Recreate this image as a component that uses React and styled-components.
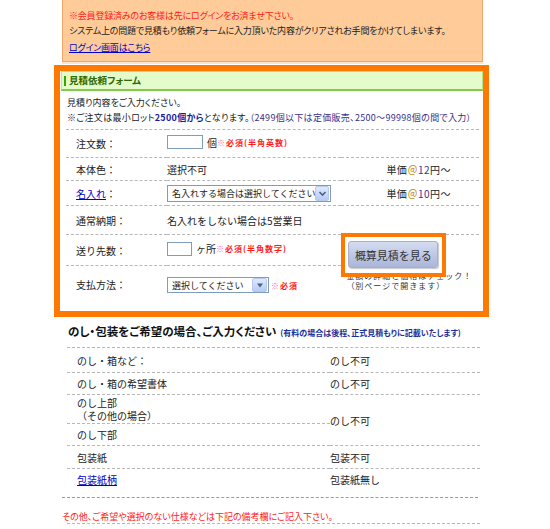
import React from "react";
import styled, { createGlobalStyle } from "styled-components";

const GlobalStyle = createGlobalStyle`
  body {
    margin: 0;
    background: #fff;
    font-family: "Noto Sans CJK JP", "Noto Sans", sans-serif;
    color: #222;
  }
`;

const Page = styled.div`
  width: 421px;
  margin-left: 62px;
  font-size: 10px;
  line-height: 15px;
`;

const Notice = styled.div`
  height: 62px;
  box-sizing: border-box;
  background: #ffcc99;
  border: 1px solid #f5a46a;
  border-top: none;
  padding: 8px 0 0 6px;
  font-size: 9px;
  letter-spacing: -0.2px;
  font-feature-settings: "palt";
  box-shadow: 0 2px 0 #fde6cf;
`;

const RedLine = styled.div`
  color: #ff1a1a;
`;

const TextLink = styled.a`
  color: #0000cc;
  text-decoration: underline;
`;

const NoticeLink = styled(TextLink)`
  display: inline-block;
  margin-top: 2px;
`;

const FormFrame = styled.div`
  width: 435px;
  margin: 3px 0 0 -8px;
  box-sizing: border-box;
  border: 6px solid #ff7800;
  padding: 0 0 0 1px;
  height: 252px;
`;

const FormTitle = styled.div`
  height: 20px;
  box-sizing: border-box;
  background: #e4fcc9;
  border: 1px solid #b4e68e;
  border-bottom: 2px solid #84c94a;
  color: #2f6a00;
  font-size: 9.5px;
  font-weight: bold;
  padding-left: 2px;
  display: flex;
  align-items: center;
  font-feature-settings: "palt";

  &::before {
    content: "";
    width: 2px;
    height: 10px;
    background: #3aa300;
    margin-right: 3px;
  }
`;

const Intro = styled.div`
  margin-top: 4px;
  padding-left: 6px;
  font-size: 9px;
  font-feature-settings: "palt";
`;

const IntroLine = styled.div`
  letter-spacing: ${(p) => p.$spacing || 0}px;
  white-space: nowrap;
`;

const Strong = styled.b`
  color: ${(p) => p.$color || "inherit"};
  font-weight: bold;
`;

const Tone = styled.span`
  color: ${(p) => p.$color};
`;

const Table = styled.table`
  border-collapse: collapse;
  margin: ${(p) => p.$top}px 0 0 5px;
  width: 413px;

  td {
    border-top: 1px dashed #b8b8b8;
    padding: 0;
    vertical-align: middle;
  }
`;

const Row = styled.tr`
  height: ${(p) => p.$h}px;
`;

const Label = styled.td`
  width: ${(p) => p.$w}px;
  padding-left: 10px !important;
  box-sizing: border-box;
`;

const Price = styled.td`
  padding-left: 45px !important;
  letter-spacing: 0.5px;
`;

const Field = styled.span`
  display: inline-flex;
  align-items: center;
`;

const Box = styled.span`
  display: inline-block;
  width: ${(p) => p.$w}px;
  height: 14px;
  box-sizing: border-box;
  border: 1px solid #7f9db9;
  background: #fff;
  margin-right: 4px;
`;

const Required = styled.span`
  color: #ff1a1a;
  font-size: 8px;
  font-weight: bold;
  letter-spacing: 1px;

  &::before {
    content: "※";
    color: #ff66aa;
    font-weight: normal;
  }
`;

const Select = styled.span`
  display: inline-flex;
  align-items: center;
  justify-content: space-between;
  width: ${(p) => p.$w}px;
  height: ${(p) => p.$h}px;
  box-sizing: border-box;
  border: 1px solid #7f9db9;
  padding: 0 1px 0 4px;
  background: #fff;
  margin-right: 2px;
  font-size: 9px;
  white-space: nowrap;
`;

const SelectButton = styled.span`
  display: inline-flex;
  align-items: center;
  justify-content: center;
  width: 15px;
  height: ${(p) => p.$h}px;
  border-radius: 2px;
  background: linear-gradient(#dfe9fd, #b6cbf5);
  border: 1px solid #b7c9ef;
  box-sizing: border-box;
`;

const ButtonCell = styled.td`
  vertical-align: top !important;
  padding-left: 0 !important;
`;

const ButtonFrame = styled.div`
  position: relative;
  z-index: 1;
  width: 105px;
  height: 44px;
  box-sizing: border-box;
  margin-top: -2px;
  border: 4px solid #ff7800;
  background: #fff;
  padding: 4px 0 0 3px;
`;

const EstimateButton = styled.button`
  width: 90px;
  height: 27px;
  border: 1px solid #a9b1c6;
  border-radius: 3px;
  background: linear-gradient(#d4dcf0, #aab6d9);
  box-shadow: 1px 1px 1px #c8c8c8;
  font-family: inherit;
  font-size: 11px;
  color: #333;
  padding: 0;
`;

const ButtonNote = styled.div`
  margin: -6px 0 0 5px;
  font-size: 8px;
  line-height: 10px;
  letter-spacing: 1px;
  color: #333;
  white-space: nowrap;
`;

const SectionHead = styled.div`
  margin-top: 5px;
  padding-left: 6px;
  font-size: 11.5px;
  line-height: 18px;
  font-weight: bold;
  color: #111;
  font-feature-settings: "palt";
  white-space: nowrap;
`;

const SectionSub = styled.span`
  font-size: 8px;
  color: #1a2f99;
  margin-left: 4px;
`;

const NoteLines = styled.div`
  line-height: 13px;
`;

const Rule = styled.div`
  margin-top: 6px;
  width: 416px;
  border-top: 1px dashed #9a9a9a;
`;

const RedNote = styled.div`
  margin-top: 13px;
  color: #ff1a1a;
  font-size: 9px;
  line-height: 12px;
  font-feature-settings: "palt";
`;

const DashLine = styled.div`
  margin-left: 5px;
  width: 413px;
  border-top: 1px dashed #b8b8b8;
`;

const Chevron = () => (
  <svg width="9" height="7" viewBox="0 0 9 7">
    <path d="M1.5 2 L4.5 5 L7.5 2" fill="none" stroke="#4d6185" strokeWidth="1.6" />
  </svg>
);

const Triangle = () => (
  <svg width="8" height="5" viewBox="0 0 8 5">
    <path d="M1 0.5 H7 L4 4.5 Z" fill="#4d6185" />
  </svg>
);

const UnitPrice = ({ value }) => (
  <>
    単価<Tone $color="#b8860b">＠</Tone>
    <Tone $color="#333399">{value}</Tone>円～
  </>
);

export default function App() {
  return (
    <Page>
      <GlobalStyle />
      <Notice>
        <RedLine>※会員登録済みのお客様は先にログインをお済ませ下さい。</RedLine>
        <div>システム上の問題で見積もり依頼フォームに入力頂いた内容がクリアされお手間をかけてしまいます。</div>
        <NoticeLink href="#">ログイン画面はこちら</NoticeLink>
      </Notice>

      <FormFrame>
        <FormTitle>見積依頼フォーム</FormTitle>
        <Intro>
          <IntroLine>見積り内容をご入力ください。</IntroLine>
          <IntroLine $spacing={0.3}>
            ※ご注文は最小ロット<Strong $color="#1a1aa0">2500個から</Strong>となります。
            <Tone $color="#3a2f8a">（2499個以下は定価販売、2500～99998個の間で入力）</Tone>
          </IntroLine>
        </Intro>
        <Table $top={4}>
          <tbody>
            <Row $h={28}>
              <Label $w={101}>注文数：</Label>
              <td colSpan={2}>
                <Field>
                  <Box $w={36} />個<Required>必須(半角英数)</Required>
                </Field>
              </td>
            </Row>
            <Row $h={23}>
              <Label $w={101}>本体色：</Label>
              <td>選択不可</td>
              <Price><UnitPrice value="12" /></Price>
            </Row>
            <Row $h={25}>
              <Label $w={101}>
                <TextLink href="#">名入れ</TextLink>：
              </Label>
              <td>
                <Select $w={164} $h={17}>
                  名入れする場合は選択してください
                  <SelectButton $h={15}><Chevron /></SelectButton>
                </Select>
              </td>
              <Price><UnitPrice value="10" /></Price>
            </Row>
            <Row $h={29}>
              <Label $w={101}>通常納期：</Label>
              <td colSpan={2}>名入れをしない場合は5営業日</td>
            </Row>
            <Row $h={31}>
              <Label $w={101}>送り先数：</Label>
              <td>
                <Field>
                  <Box $w={25} />ヶ所<Required>必須(半角数字)</Required>
                </Field>
              </td>
              <ButtonCell rowSpan={2}>
                <ButtonFrame>
                  <EstimateButton type="button">概算見積を見る</EstimateButton>
                </ButtonFrame>
                <ButtonNote>
                  <div>金額の詳細と価格はチェック！</div>
                  <div>（別ページで開きます）</div>
                </ButtonNote>
              </ButtonCell>
            </Row>
            <Row $h={38}>
              <Label $w={101}>支払方法：</Label>
              <td>
                <Field>
                  <Select $w={102} $h={16}>
                    選択してください
                    <SelectButton $h={14}><Triangle /></SelectButton>
                  </Select>
                  <Required>必須</Required>
                </Field>
              </td>
            </Row>
          </tbody>
        </Table>
      </FormFrame>

      <SectionHead>
        のし・包装をご希望の場合、ご入力ください
        <SectionSub>(有料の場合は後程、正式見積もりに記載いたします)</SectionSub>
      </SectionHead>
      <Table $top={5}>
        <tbody>
          <Row $h={25}>
            <Label $w={263}>のし・箱など：</Label>
            <td>のし不可</td>
          </Row>
          <Row $h={22}>
            <Label $w={263}>のし・箱の希望書体</Label>
            <td>のし不可</td>
          </Row>
          <Row $h={29}>
            <Label $w={263}>
              <NoteLines>
                のし上部
                <br />
                （その他の場合）
              </NoteLines>
            </Label>
            <td rowSpan={2}>のし不可</td>
          </Row>
          <Row $h={22}>
            <Label $w={263}>のし下部</Label>
          </Row>
          <Row $h={23}>
            <Label $w={263}>包装紙</Label>
            <td>包装不可</td>
          </Row>
          <Row $h={22}>
            <Label $w={263}>
              <TextLink href="#">包装紙柄</TextLink>
            </Label>
            <td>包装紙無し</td>
          </Row>
        </tbody>
      </Table>
      <Rule />
      <RedNote>その他、ご希望や選択のない仕様などは下記の備考欄にご記入下さい。</RedNote>
      <DashLine />
    </Page>
  );
}
